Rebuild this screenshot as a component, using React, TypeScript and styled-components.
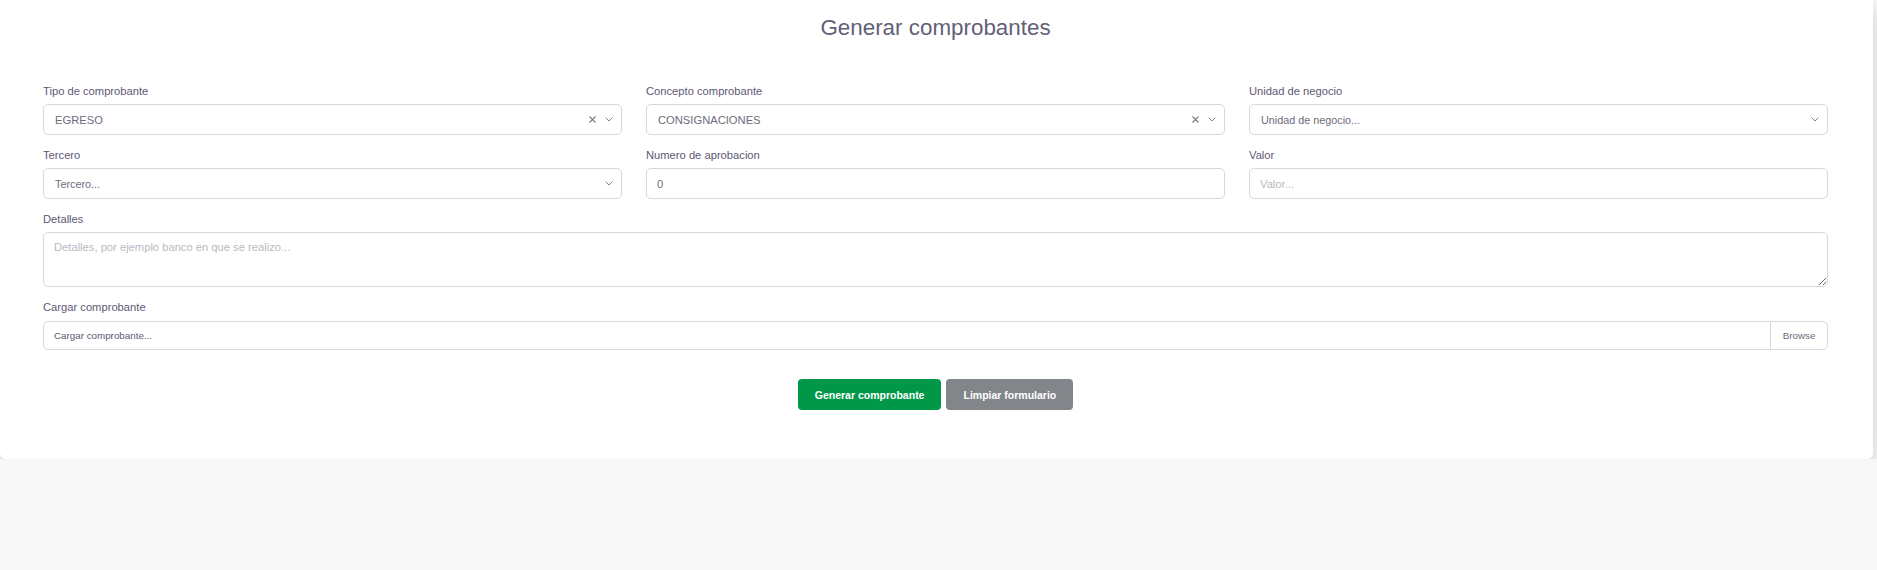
import React from "react";
import styled, { createGlobalStyle } from "styled-components";

const GlobalStyle = createGlobalStyle`
  html, body {
    margin: 0;
    padding: 0;
    background: #f8f8f8;
    font-family: "Liberation Sans", Arial, Helvetica, sans-serif;
  }
`;

function Chevron() {
  return (
    <svg width="8" height="5" viewBox="0 0 8 5">
      <polyline points="0.5,0.5 4,4 7.5,0.5" fill="none" stroke="#8a8a94" strokeWidth="1" />
    </svg>
  );
}

function Clear() {
  return (
    <svg width="7" height="7" viewBox="0 0 7 7">
      <path d="M0.5 0.5 L6.5 6.5 M6.5 0.5 L0.5 6.5" stroke="#7d7a88" strokeWidth="1.1" />
    </svg>
  );
}

interface SelectProps {
  value?: string;
  placeholder?: string;
  clearable?: boolean;
}

function FakeSelect(props: SelectProps): JSX.Element {
  const { value, placeholder, clearable } = props;
  return (
    <SelectBox>
      <SelectValue $empty={!value}>{value || placeholder}</SelectValue>
      <SelectIcons>
        {clearable && <Clear />}
        <Chevron />
      </SelectIcons>
    </SelectBox>
  );
}

function App(): JSX.Element {
  return (
    <>
      <GlobalStyle />
      <Card>
        <Title>Generar comprobantes</Title>
        <Form>
          <Field>
            <Label>Tipo de comprobante</Label>
            <FakeSelect value="EGRESO" clearable />
          </Field>
          <Field>
            <Label>Concepto comprobante</Label>
            <FakeSelect value="CONSIGNACIONES" clearable />
          </Field>
          <Field>
            <Label>Unidad de negocio</Label>
            <FakeSelect placeholder="Unidad de negocio..." />
          </Field>

          <Field>
            <Label>Tercero</Label>
            <FakeSelect placeholder="Tercero..." />
          </Field>
          <Field>
            <Label>Numero de aprobacion</Label>
            <TextInput defaultValue="0" readOnly />
          </Field>
          <Field>
            <Label>Valor</Label>
            <TextInput placeholder="Valor..." readOnly />
          </Field>

          <Field $wide>
            <Label>Detalles</Label>
            <TextArea placeholder="Detalles, por ejemplo banco en que se realizo..." readOnly />
          </Field>

          <Field $wide>
            <Label>Cargar comprobante</Label>
            <FileBox>
              <FileText>Cargar comprobante...</FileText>
              <BrowseButton>Browse</BrowseButton>
            </FileBox>
          </Field>
        </Form>

        <Actions>
          <ActionButton $color="#009848">Generar comprobante</ActionButton>
          <ActionButton $color="#82868b">Limpiar formulario</ActionButton>
        </Actions>
      </Card>
    </>
  );
}

const Card = styled.div`
  background: #fff;
  margin-right: 4px;
  padding: 14px 45px 49px 43px;
  border-radius: 0 0 6px 6px;
  box-shadow: 0 6px 22px 0 rgba(34, 41, 47, 0.2);
`;

const Title = styled.h2`
  margin: 0 0 42px;
  text-align: center;
  font-size: 22.4px;
  line-height: 27px;
  font-weight: 400;
  color: #625f78;
`;

const Form = styled.div`
  display: grid;
  grid-template-columns: repeat(3, 1fr);
  column-gap: 24px;
  row-gap: 12px;
`;

const Field = styled.div<{ $wide?: boolean }>`
  display: flex;
  flex-direction: column;
  gap: 5px;
  grid-column: ${p => (p.$wide ? "1 / -1" : "auto")};
`;

const Label = styled.label`
  font-size: 11.2px;
  line-height: 16px;
  color: #5e5873;
`;

const boxBase = `
  box-sizing: border-box;
  border: 1px solid #d8d6de;
  border-radius: 5px;
  background: #fff;
  font-family: "Liberation Sans", Arial, Helvetica, sans-serif;
  font-size: 11.2px;
  color: #6e6b7b;
`;

const SelectBox = styled.div`
  ${boxBase}
  height: 31px;
  display: flex;
  align-items: center;
  justify-content: space-between;
  padding: 0 8px 0 11px;
`;

const SelectValue = styled.span<{ $empty?: boolean }>`
  color: #6e6b7b;
  font-size: ${p => (p.$empty ? "10.8px" : "11.2px")};
`;

const SelectIcons = styled.div`
  display: flex;
  align-items: center;
  gap: 9px;
`;

const TextInput = styled.input`
  ${boxBase}
  height: 31px;
  padding: 0 10px;
  outline: none;
  &::placeholder {
    color: #b9b9c3;
  }
`;

const TextArea = styled.textarea`
  ${boxBase}
  display: block;
  height: 55px;
  padding: 8px 10px;
  outline: none;
  resize: vertical;
  &::placeholder {
    color: #b9b9c3;
  }
`;

const FileBox = styled.div`
  ${boxBase}
  height: 29px;
  margin-top: 1px;
  display: flex;
  align-items: stretch;
  overflow: hidden;
`;

const FileText = styled.span`
  flex: 1;
  display: flex;
  align-items: center;
  padding-left: 10px;
  font-size: 9.8px;
  color: #5e5873;
`;

const BrowseButton = styled.span`
  width: 56px;
  display: flex;
  align-items: center;
  justify-content: center;
  border-left: 1px solid #d8d6de;
  font-size: 9.8px;
  color: #6e6b7b;
`;

const Actions = styled.div`
  margin-top: 29px;
  display: flex;
  justify-content: center;
  gap: 5px;
`;

const ActionButton = styled.button<{ $color: string }>`
  height: 31px;
  padding: 0 17px;
  border: none;
  border-radius: 4px;
  background: ${p => p.$color};
  color: #fff;
  font-family: "Liberation Sans", Arial, Helvetica, sans-serif;
  font-size: 10.5px;
  font-weight: 700;
  cursor: pointer;
`;

export default App;
